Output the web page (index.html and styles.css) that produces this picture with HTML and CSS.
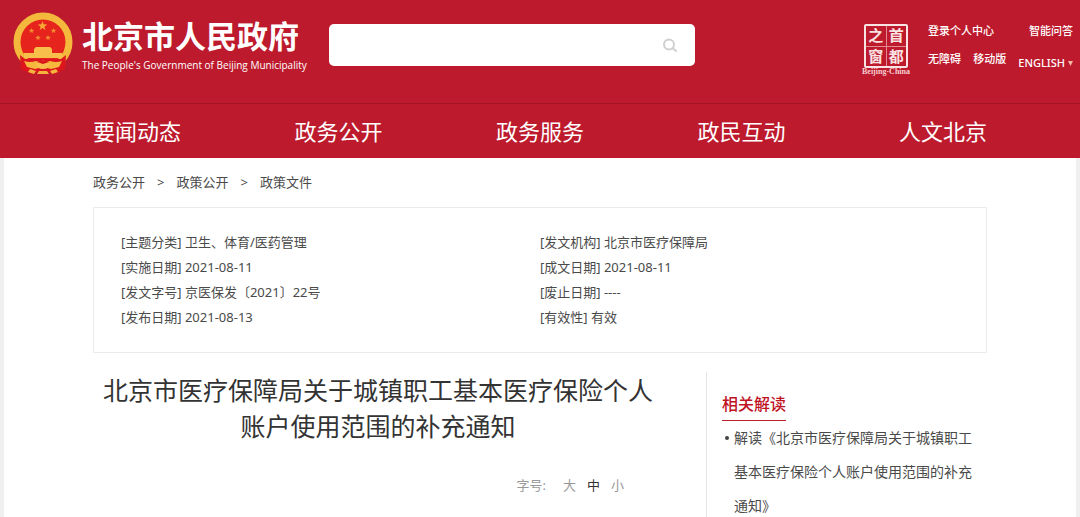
FILE: index.html
```html
<!DOCTYPE html>
<html lang="zh-CN">
<head>
<meta charset="utf-8">
<meta name="viewport" content="width=device-width, initial-scale=1">
<title>北京市人民政府</title>
<link rel="stylesheet" href="styles.css">
</head>
<body>
<header class="header">
  <div class="masthead">
    <a class="brand" href="#">
      <svg class="emblem" viewBox="0 0 60 62" aria-hidden="true">
        <circle cx="30" cy="30" r="26" fill="#e6241d" stroke="#f3b83c" stroke-width="7"/>
        <path d="M7 43L8 57L18 62L30 59L42 62L52 57L53 43L48 47H12Z" fill="#dc161c"/>
        <path d="M29.500 9l1.200 3.300 3.500.2-2.800 2.200 1 3.400-2.900-2-2.900 2 1-3.400-2.800-2.200 3.500-.2z" fill="#f8a832"/>
        <g fill="#f28a30">
          <path d="M18.500 16l.8 1.800 2 .1-1.600 1.300.6 1.900-1.800-1.100-1.800 1.100.6-1.900-1.600-1.300 2-.1z"/>
          <path d="M40.500 16l.8 1.800 2 .1-1.600 1.300.6 1.900-1.800-1.100-1.800 1.100.6-1.900-1.600-1.300 2-.1z"/>
          <path d="M25 23l.8 1.800 2 .1-1.600 1.300.6 1.900-1.800-1.100-1.800 1.100.6-1.900-1.600-1.300 2-.1z"/>
          <path d="M35 23l.8 1.800 2 .1-1.600 1.300.6 1.900-1.800-1.100-1.800 1.100.6-1.900-1.600-1.300 2-.1z"/>
        </g>
        <path d="M23 35h14l2 2v4h10v5H11v-5h10v-4z" fill="#f8c04a"/>
        <path d="M11 49q6 2 12 0l7 2 7-2q6 2 12 0l-3 6-8 2-8-2-8 2-8-2z" fill="#f6b93d"/>
        <path d="M24 51q6-5 12 0 1 6-6 6t-6-6z" fill="#f8c04a"/>
        <path d="M24 50q6-3 12 0l-6 2z" fill="#d9181d"/>
        <path d="M17 57l6 2-2 3-6-2zM43 57l-6 2 2 3 6-2zM26 59h8l2 3H24z" fill="#f3b53c"/>
      </svg>
      <span class="brand-text">
        <strong class="brand-name">北京市人民政府</strong>
        <span class="brand-en">The People's Government of Beijing Municipality</span>
      </span>
    </a>
    <form class="search" role="search">
      <input class="search-input" type="search" aria-label="搜索">
      <button class="search-button" type="button" aria-label="搜索">
        <svg width="16" height="16" viewBox="0 0 16 16" fill="none" stroke="#d0d0d0" stroke-width="2" stroke-linecap="round" aria-hidden="true"><circle cx="7" cy="7.500" r="5"/><path d="M11 11.500l3 2.500"/></svg>
      </button>
    </form>
    <div class="tools">
      <a class="seal" href="#">
        <span class="seal-box"><span>之</span><span>首</span><span>窗</span><span>都</span></span>
        <span class="seal-caption">Beijing·China</span>
      </a>
      <div class="links">
        <div class="links-row"><a href="#">登录个人中心</a><a href="#">智能问答</a></div>
        <div class="links-row"><a href="#">无障碍</a><a href="#">移动版</a><button class="language" type="button">ENGLISH<svg width="5" height="5" viewBox="0 0 5 5" aria-hidden="true"><path d="M0 0h5L2.500 5z" fill="#f3b7a4"/></svg></button></div>
      </div>
    </div>
  </div>
  <nav class="nav">
    <div class="container nav-items">
      <a href="#">要闻动态</a><a href="#">政务公开</a><a href="#">政务服务</a><a href="#">政民互动</a><a href="#">人文北京</a>
    </div>
  </nav>
</header>
<main class="page">
  <div class="container">
    <nav class="crumbs" aria-label="位置"><a href="#">政务公开</a><span>&gt;</span><a href="#">政策公开</a><span>&gt;</span><a href="#">政策文件</a></nav>
    <div class="meta">
      <ul class="meta-list">
        <li>[主题分类] 卫生、体育/医药管理</li>
        <li>[实施日期] 2021-08-11</li>
        <li>[发文字号] 京医保发〔2021〕22号</li>
        <li>[发布日期] 2021-08-13</li>
      </ul>
      <ul class="meta-list">
        <li>[发文机构] 北京市医疗保障局</li>
        <li>[成文日期] 2021-08-11</li>
        <li>[废止日期] ----</li>
        <li>[有效性] 有效</li>
      </ul>
    </div>
    <div class="columns">
      <article class="article">
        <h1 class="title">北京市医疗保障局关于城镇职工基本医疗保险个人账户使用范围的补充通知</h1>
        <div class="font-size"><span class="font-size-label">字号:</span><button type="button">大</button><button class="current" type="button">中</button><button type="button">小</button></div>
      </article>
      <aside class="related">
        <h2 class="related-title">相关解读</h2>
        <ul class="related-list"><li><a href="#">解读《北京市医疗保障局关于城镇职工基本医疗保险个人账户使用范围的补充通知》</a></li></ul>
      </aside>
    </div>
  </div>
</main>
</body>
</html>
```
FILE: styles.css
```css
* { box-sizing: border-box; }

body {
  margin: 0;
  background: #f0f0f0;
  color: #4a4a4a;
  font: 13px/25px "Noto Sans", "Noto Sans CJK SC", sans-serif;
}

a { color: inherit; text-decoration: none; }

button {
  padding: 0;
  border: 0;
  background: none;
  color: inherit;
  font: inherit;
  cursor: pointer;
}

ul { margin: 0; padding: 0; list-style: none; }

.container { max-width: 894px; margin: 0 auto; }

.header { background: #bd1b2d; color: #fff; }

.masthead {
  display: flex;
  align-items: flex-start;
  height: 104px;
  padding: 12px 7px 0 13px;
  border-bottom: 1px solid #a41425;
}

.brand { display: flex; flex: none; gap: 9px; width: 316px; }

.emblem { width: 60px; height: 62px; }

.brand-text { display: flex; flex-direction: column; padding-top: 4px; }

.brand-name { font-size: 31px; line-height: 40px; font-weight: 700; }

.brand-en {
  font-family: "Open Sans", sans-serif;
  font-size: 10px;
  line-height: 18px;
  white-space: nowrap;
}

.search {
  display: flex;
  flex: 0 1 366px;
  height: 42px;
  margin-top: 12px;
  border-radius: 5px;
  background: #fff;
}

.search-input {
  flex: 1;
  min-width: 0;
  padding: 0 16px;
  border: 0;
  background: none;
  font: inherit;
  outline: 0;
}

.search-button { display: grid; place-items: center; width: 50px; }

.tools { display: flex; gap: 18px; margin-left: auto; }

.seal {
  display: flex;
  flex-direction: column;
  align-items: center;
  width: 48px;
  padding-top: 12px;
}

.seal-box {
  display: grid;
  grid-template-columns: 1fr 1fr;
  gap: 1px;
  width: 44px;
  height: 44px;
  border: 2px solid #fbe3e4;
  border-radius: 2px;
  background: #e58a92;
}

.seal-box span {
  background: #bd1b2d;
  color: #fbe3e4;
  font-size: 15px;
  font-weight: 700;
  line-height: 19px;
  text-align: center;
}

.seal-caption {
  color: #f6cdd0;
  font: 700 8px/8px "Liberation Serif", serif;
  white-space: nowrap;
}

.links {
  display: flex;
  flex-direction: column;
  gap: 12px;
  width: 145px;
  padding-top: 11px;
  font-size: 11px;
  font-weight: 500;
  line-height: 16px;
}

.links-row { display: flex; justify-content: space-between; }

.language { display: flex; align-items: center; gap: 3px; padding-top: 4px; }

.nav-items {
  display: flex;
  justify-content: space-between;
  font-size: 22px;
  line-height: 54px;
}

.page {
  min-height: calc(100vh - 158px);
  margin: 0 4px;
  background: #fff;
}

.crumbs { display: flex; gap: 12px; line-height: 49px; }

.meta {
  display: grid;
  grid-template-columns: 1fr 1fr;
  padding: 22px 27px;
  border: 1px solid #ebebeb;
}

.columns {
  display: grid;
  grid-template-columns: minmax(0, 613px) minmax(0, 281px);
  padding-top: 19px;
}

.article { padding-right: 43px; }

.title {
  margin: 0;
  color: #333;
  font-size: 25px;
  font-weight: 400;
  line-height: 36px;
  text-align: center;
}

.font-size {
  display: flex;
  justify-content: flex-end;
  gap: 11px;
  padding: 29px 39px 0 0;
  color: #999;
}

.font-size-label { margin-right: 6px; }

.font-size .current { color: #333; }

.related { padding: 16px 8px 0 15px; border-left: 1px solid #e6e6e6; }

.related-title {
  width: fit-content;
  margin: 0;
  border-bottom: 1px solid #b9202f;
  color: #c0121f;
  font-size: 16px;
  font-weight: 500;
  line-height: 32px;
}

.related-list { font-size: 14px; line-height: 34px; }

.related-list li { display: flex; }

.related-list li::before {
  content: "";
  flex: none;
  width: 4px;
  height: 4px;
  margin: 15px 5px 0 3px;
  border-radius: 50%;
  background: #444;
}
```
